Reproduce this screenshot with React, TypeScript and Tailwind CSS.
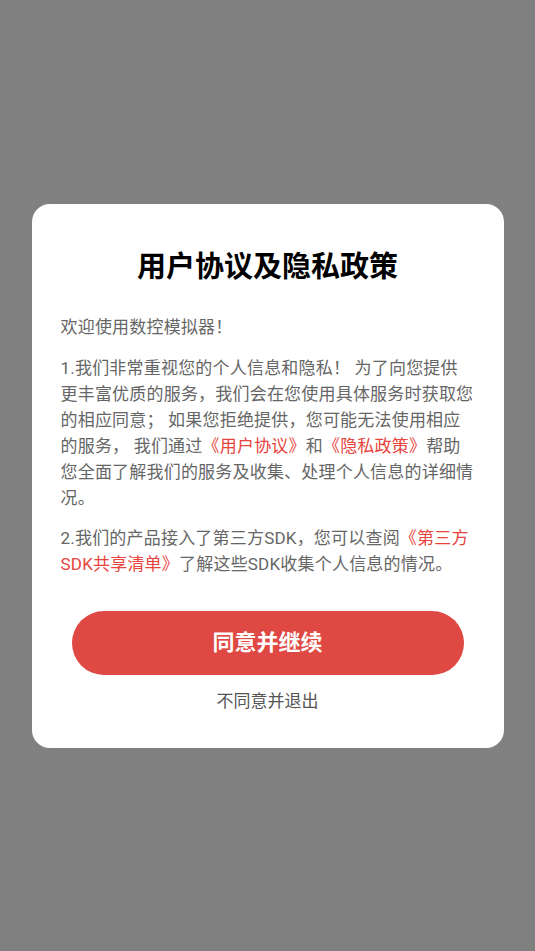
export default function App() {
  const link = "text-[#e8433d]";
  return (
    <div
      className="flex h-[951px] w-full items-center justify-center bg-[#808080]"
      style={{ fontFamily: "Roboto, 'Noto Sans CJK SC', sans-serif" }}
    >
      {/* 隐私协议弹窗 */}
      <div className="w-[472px] rounded-[18px] bg-white px-[29px] pb-[34px] pt-[45px]">
        <h1 className="text-center text-[29px] font-bold leading-[36px] text-black">用户协议及隐私政策</h1>
        <div className="mt-[29px] whitespace-nowrap text-[17px] leading-[26px] tracking-[0.2px] text-[#666666]">
          <p>欢迎使用数控模拟器！</p>
          <p className="mt-[15px]">
            1.我们非常重视您的个人信息和隐私！ 为了向您提供
            <br />
            更丰富优质的服务，我们会在您使用具体服务时获取您
            <br />
            的相应同意； 如果您拒绝提供，您可能无法使用相应
            <br />
            的服务， 我们通过<span className={link}>《用户协议》</span>和<span className={link}>《隐私政策》</span>帮助
            <br />
            您全面了解我们的服务及收集、处理个人信息的详细情
            <br />
            况。
          </p>
          <p className="mt-[14px]">
            2.我们的产品接入了第三方SDK，您可以查阅<span className={link}>《第三方</span>
            <br />
            <span className={link}>SDK共享清单》</span>了解这些SDK收集个人信息的情况。
          </p>
        </div>
        <div className="mt-[34px] flex flex-col items-center">
          <button className="h-[64px] w-[392px] rounded-full bg-[#e04844] text-[22px] font-bold text-white">
            同意并继续
          </button>
          <button className="mt-[13px] text-[17px] leading-[26px] text-[#555555]">不同意并退出</button>
        </div>
      </div>
    </div>
  );
}
